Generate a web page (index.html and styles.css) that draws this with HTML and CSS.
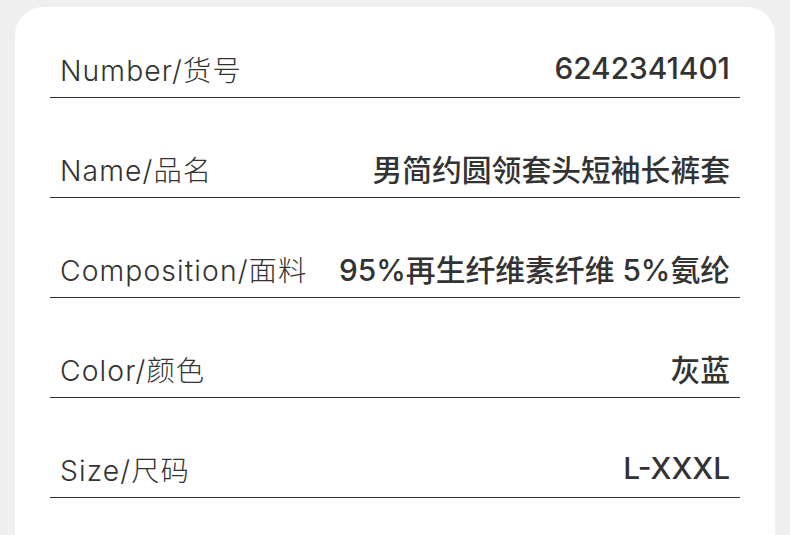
FILE: index.html
```html
<!DOCTYPE html>
<html lang="zh-CN">
<head>
<meta charset="utf-8">
<title>Product info</title>
<link rel="stylesheet" href="styles.css">
</head>
<body>
<div class="card">
  <div class="row"><span class="label">Number/货号</span><span class="value">6242341401</span></div>
  <div class="row"><span class="label">Name/品名</span><span class="value">男简约圆领套头短袖长裤套</span></div>
  <div class="row"><span class="label">Composition/面料</span><span class="value">95%再生纤维素纤维 5%氨纶</span></div>
  <div class="row"><span class="label">Color/颜色</span><span class="value">灰蓝</span></div>
  <div class="row"><span class="label">Size/尺码</span><span class="value">L-XXXL</span></div>
</div>
</body>
</html>
```
FILE: styles.css
```css
html, body {
  margin: 0;
  padding: 0;
  background: #efefef;
  height: 100%;
  overflow: hidden;
}
body {
  font-family: Inter, "Noto Sans CJK SC", sans-serif;
  color: #333;
}
.card {
  margin: 7px 15px 0 15px;
  background: #fff;
  border-radius: 28px;
  padding: 0 35px 80px 35px;
}
.row {
  display: flex;
  justify-content: space-between;
  align-items: center;
  height: 40px;
  padding: 50px 10px 9px 10px;
  border-bottom: 1px solid #333;
}
.row:first-child {
  padding-top: 41px;
}
.label {
  font-size: 28.3px;
  font-weight: 300;
  letter-spacing: 1.1px;
  color: #333;
  white-space: nowrap;
}
.value {
  font-size: 29.8px;
  font-weight: 500;
  color: #333;
  white-space: nowrap;
}
```
